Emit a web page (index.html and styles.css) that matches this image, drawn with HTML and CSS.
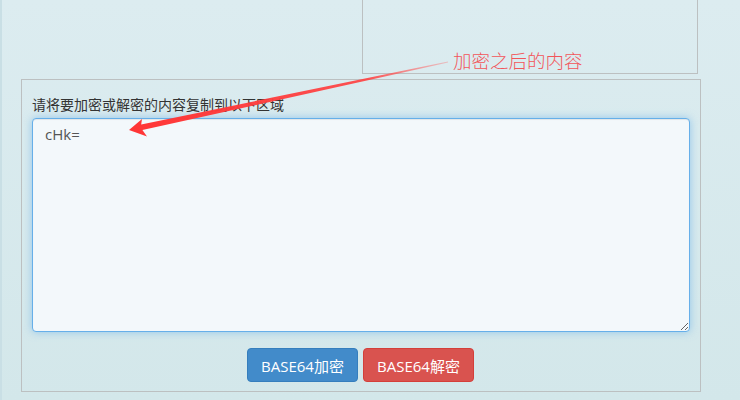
FILE: index.html
```html
<!DOCTYPE html>
<html lang="zh-CN">
<head>
<meta charset="utf-8">
<title>BASE64</title>
<link rel="stylesheet" href="styles.css">
</head>
<body>
<div class="page">
  <div class="top-row">
    <div class="top-box"></div>
  </div>
  <div class="panel">
    <div class="label">请将要加密或解密的内容复制到以下区域</div>
    <textarea class="content">cHk=</textarea>
    <div class="actions">
      <button class="btn btn-blue">BASE64加密</button>
      <button class="btn btn-red">BASE64解密</button>
    </div>
  </div>
</div>
<div class="note">加密之后的内容</div>
<svg class="arrow" width="740" height="400" viewBox="0 0 740 400" xmlns="http://www.w3.org/2000/svg">
  <defs>
    <linearGradient id="fade" x1="448" y1="62" x2="129" y2="130" gradientUnits="userSpaceOnUse">
      <stop offset="0" stop-color="#ff6a6a" stop-opacity="0.35"/>
      <stop offset="0.25" stop-color="#ff4040" stop-opacity="0.9"/>
      <stop offset="1" stop-color="#ff3535"/>
    </linearGradient>
  </defs>
  <polygon fill="url(#fade)" points="129,130 142,119 141.2,124.6 447.9,61.4 448.1,62.6 142.4,130 147,136.5"/>
</svg>
</body>
</html>
```
FILE: styles.css
```css
html, body {
  margin: 0;
  padding: 0;
}
body {
  width: 740px;
  height: 400px;
  overflow: hidden;
  background: linear-gradient(#dcecf0, #d3e7ea);
  font-family: "Open Sans", "Noto Sans CJK SC", sans-serif;
  position: relative;
}
.page {
  border-left: 2px solid #c9dfe5;
  height: 400px;
  box-sizing: border-box;
}
.top-row {
  height: 74px;
  display: flex;
  justify-content: flex-end;
  padding-right: 42px;
}
.top-box {
  width: 336px;
  height: 74px;
  box-sizing: border-box;
  border: 1px solid #bcc0c1;
  border-top: none;
}
.panel {
  margin: 5px 0 0 19px;
  width: 680px;
  box-sizing: border-box;
  border: 1px solid #bcc0c1;
  padding: 16px 10px 9px 10px;
}
.label {
  font-size: 14px;
  line-height: 18px;
  color: #333;
  margin-bottom: 4px;
}
.content {
  display: block;
  width: 658px;
  height: 214px;
  box-sizing: border-box;
  margin: 0;
  padding: 5px 12px;
  border: 1px solid #66afe9;
  border-radius: 4px;
  background: #f3f8fb;
  color: #555;
  font-family: "Open Sans", "Noto Sans CJK SC", sans-serif;
  font-size: 15px;
  line-height: 20px;
  box-shadow: inset 0 1px 1px rgba(0,0,0,.075), 0 0 8px rgba(102,175,233,.6);
  outline: none;
  resize: vertical;
}
.actions {
  display: flex;
  justify-content: center;
  gap: 5px;
  margin-top: 16px;
  padding-right: 1px;
}
.btn {
  width: 111px;
  height: 34px;
  box-sizing: border-box;
  border-radius: 4px;
  border: 1px solid transparent;
  color: #fff;
  font-family: "Open Sans", "Noto Sans CJK SC", sans-serif;
  font-size: 15px;
  padding: 0;
  cursor: pointer;
}
.btn-blue {
  background: #428bca;
  border-color: #357ebd;
}
.btn-red {
  background: #d9534f;
  border-color: #d43f3a;
}
.note {
  position: absolute;
  left: 453px;
  top: 47px;
  font-size: 18.5px;
  line-height: 26px;
  color: #f2555a;
  font-family: "Noto Sans CJK SC", sans-serif;
  font-weight: 300;
}
.arrow {
  position: absolute;
  left: 0;
  top: 0;
  pointer-events: none;
}
```
